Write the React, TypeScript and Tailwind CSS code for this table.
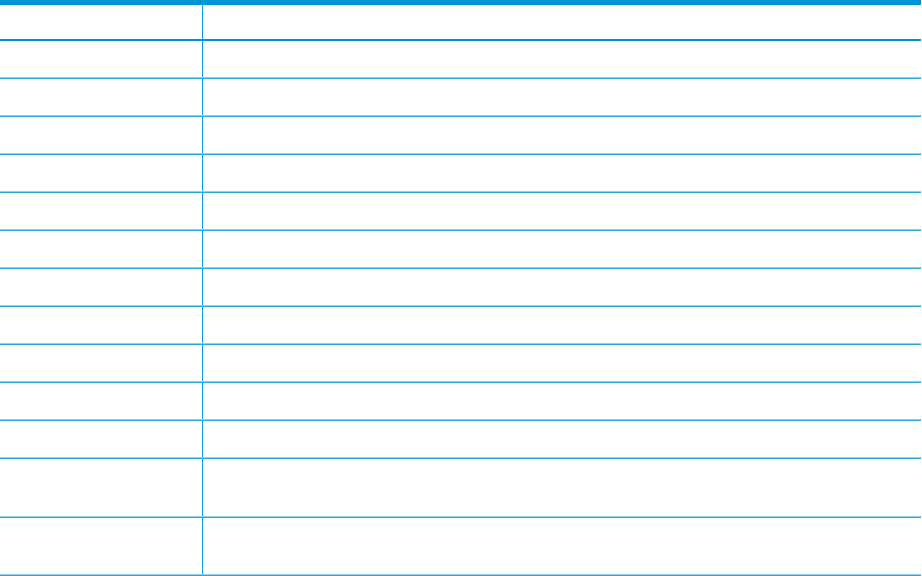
import React from 'react';

const rowHeights = [36, 36, 36, 36, 36, 36, 36, 36, 36, 36, 36, 57, 56];

export default function App() {
  return (
    <div className="h-[576px] w-[922px] bg-white font-['Liberation_Sans',sans-serif]">
      <div className="flex w-[921px] flex-col">
        {/* 상단 굵은 선 */}
        <div className="h-[5px] bg-[#0096d6]"></div>

        {/* 헤더 */}
        <div className="flex h-[34px]">
          <div className="w-[202px]"></div>
          <div className="w-px bg-[#0aa0e2]"></div>
          <div className="flex-1"></div>
        </div>
        <div className="h-[2px] bg-[#0096d6]"></div>

        {/* 본문 행 */}
        {rowHeights.map((h, i) => (
          <React.Fragment key={i}>
            <div className="flex" style={{ height: h }}>
              <div className="w-[202px]"></div>
              <div className="w-px bg-[#0aa0e2]"></div>
              <div className="flex-1"></div>
            </div>
            <div className="h-px bg-[#8fd0ee]"></div>
            <div className="h-px bg-[#2ea6dd]"></div>
          </React.Fragment>
        ))}
      </div>
    </div>
  );
}
